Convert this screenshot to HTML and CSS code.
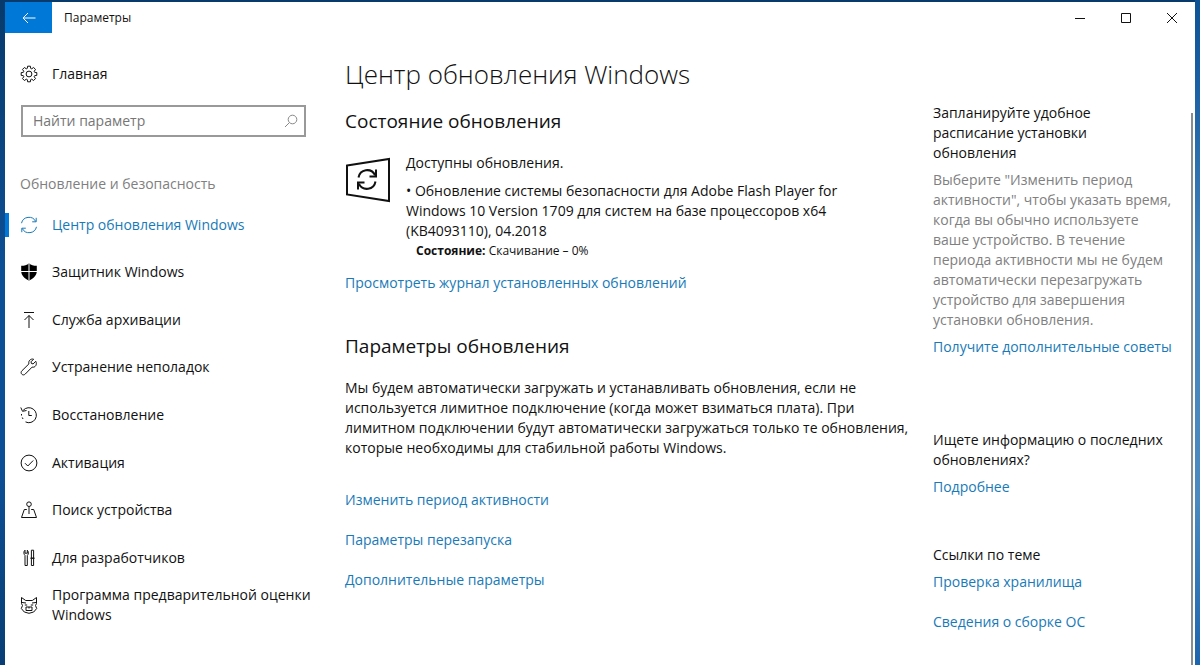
FILE: index.html
```html
<!DOCTYPE html>
<html lang="ru">
<head>
    <meta charset="UTF-8">
    <meta name="viewport" content="width=device-width, initial-scale=1.0">
    <title>Параметры</title>
    <link rel="stylesheet" href="styles.css">
</head>
<body>

<div class="window">

    <!-- Заголовок окна -->
    <header class="titlebar">
        <button class="back" aria-label="Назад">
            <svg width="14" height="12" viewBox="0 0 14 12"><path d="M13.500 6H1M6 1L1 6l5 5"/></svg>
        </button>
        <span class="title">Параметры</span>
        <button class="control" aria-label="Свернуть">
            <svg width="12" height="12" viewBox="0 0 12 12"><path d="M1 6.500h10"/></svg>
        </button>
        <button class="control" aria-label="Развернуть">
            <svg width="12" height="12" viewBox="0 0 12 12"><path d="M1.500 1.500h9v9h-9z"/></svg>
        </button>
        <button class="control" aria-label="Закрыть">
            <svg width="12" height="12" viewBox="0 0 12 12"><path d="M1 1l10 10M11 1L1 11"/></svg>
        </button>
    </header>

    <div class="content">

        <!-- Левое меню -->
        <aside class="sidebar">
            <a class="home" href="#">
                <svg class="icon" viewBox="0 0 18 18"><path d="M7.600 1.200h2.800l.3 2.200 1 .4 1.900-1.300 1.900 1.900-1.300 1.900.4 1 2.200.3v2.800l-2.200.3-.4 1 1.300 1.900-1.900 1.900-1.900-1.300-1 .4-.3 2.200H7.600l-.3-2.200-1-.4-1.900 1.300-1.900-1.900 1.300-1.900-.4-1-2.200-.3V7.600l2.200-.3.4-1-1.300-1.900 1.900-1.900 1.900 1.300 1-.4z"/><circle cx="9" cy="9" r="2.900"/></svg>
                Главная
            </a>

            <form class="search">
                <input type="search" placeholder="Найти параметр" aria-label="Найти параметр">
                <button type="button" aria-label="Поиск">
                    <svg width="14" height="14" viewBox="0 0 14 14"><circle cx="8.500" cy="5.500" r="4.300"/><path d="M5.400 8.600L1 13"/></svg>
                </button>
            </form>

            <h2 class="section">Обновление и безопасность</h2>

            <nav class="menu">
                <a class="item active" href="#">
                    <svg class="icon" viewBox="0 0 18 18"><path d="M1.500 7.200A7.600 7.600 0 0 1 15.700 5.500M16.500 10.800A7.600 7.600 0 0 1 2.300 12.500M16.200 1.800v4h-4M1.800 16.200v-4h4"/></svg>
                    Центр обновления Windows
                </a>
                <a class="item" href="#">
                    <svg class="icon" viewBox="0 0 18 18"><path class="solid" d="M9 .5c2.200 1.600 4.500 2.300 7.800 2.300v5.300c0 4.300-3 7.400-7.800 9.500-4.800-2.100-7.800-5.200-7.800-9.500V2.800C4.500 2.800 6.800 2.100 9 .5z"/><path class="cross" d="M9 1v16M1 8.500h16"/></svg>
                    Защитник Windows
                </a>
                <a class="item" href="#">
                    <svg class="icon" viewBox="0 0 18 18"><path d="M4 1.500h10M9 17V4.500M4.500 9L9 4.500 13.500 9"/></svg>
                    Служба архивации
                </a>
                <a class="item" href="#">
                    <svg class="icon" viewBox="0 0 18 18"><path d="M15.800 3.300l-2.700 2.600-1.700-.4-.4-1.700 2.600-2.600c-2.800-.8-5.500 1.500-4.700 4.700L2 12.700c-2.500 2.400.9 5.800 3.300 3.300l6.800-6.900c3.200.8 5.300-2.700 3.700-5.800z"/></svg>
                    Устранение неполадок
                </a>
                <a class="item" href="#">
                    <svg class="icon" viewBox="0 0 18 18"><path d="M3.200 4.300A7.500 7.500 0 1 1 5.500 15.900M.8 1.500l1.700 3.800 4-.8M8.800 5v4.500h3"/><path d="M1.500 8v1.500M2.300 11.500l.7 1.500"/></svg>
                    Восстановление
                </a>
                <a class="item" href="#">
                    <svg class="icon" viewBox="0 0 18 18"><circle cx="9" cy="9" r="7.900"/><path d="M5 9.200l2.800 2.800L13.200 6.500"/></svg>
                    Активация
                </a>
                <a class="item" href="#">
                    <svg class="icon" viewBox="0 0 18 18"><circle cx="9" cy="3.200" r="2.300"/><path d="M9 5.500v7.500M6.800 8.500H4.300L1.500 16.500h15L13.700 8.500h-2.500"/></svg>
                    Поиск устройства
                </a>
                <a class="item" href="#">
                    <svg class="icon" viewBox="0 0 18 18"><path d="M5 1.200C3.300 2.600 3.700 5.200 5 6.500v10h2.300v-10C8.700 5.200 8.800 2.600 7.300 1.200v3H5zM11.400 1.200h2.200v8h-2.200zM10.300 9.200h4.400M11.400 9.200v7.300h2.200V9.200"/></svg>
                    Для разработчиков
                </a>
                <a class="item" href="#">
                    <svg class="icon" viewBox="0 0 18 18"><path d="M1.500 1.500l4.200 3h6.600l4.200-3v6l-1 2 1.200 3-3 3.500L9 17.300 4.300 16l-3-3.500 1.200-3-1-2zM2 6.500l4 .5M16 6.500l-4 .5M6 11h6v3.500H6zM4.800 9h2.400M10.800 9h2.400M9 11v1.500"/></svg>
                    Программа предварительной оценки Windows
                </a>
            </nav>
        </aside>

        <!-- Основная часть -->
        <main class="main">
            <h1>Центр обновления Windows</h1>

            <h2>Состояние обновления</h2>
            <div class="status">
                <svg class="status-icon" width="46" height="46" viewBox="0 0 46 46">
                    <path d="M2 8.500L44 2v42L2 37.500z"/>
                    <path d="M13.500 20.500c1.500-8.500 12.500-10 16.500-2.500M31 12.500v7h-6.500M30.500 24.500c-1.500 8.500-12.500 10-16.500 2.500M13 32.500v-7h6.500"/>
                </svg>
                <div class="status-text">
                    <p class="available">Доступны обновления.</p>
                    <p>• Обновление системы безопасности для Adobe Flash Player for Windows 10 Version 1709 для систем на базе процессоров x64 (KB4093110), 04.2018</p>
                    <p class="progress"><b>Состояние:</b> Скачивание – 0%</p>
                </div>
            </div>
            <a href="#">Просмотреть журнал установленных обновлений</a>

            <h2 class="params">Параметры обновления</h2>
            <p class="info">Мы будем автоматически загружать и устанавливать обновления, если не используется лимитное подключение (когда может взиматься плата). При лимитном подключении будут автоматически загружаться только те обновления, которые необходимы для стабильной работы Windows.</p>
            <div class="links">
                <a href="#">Изменить период активности</a>
                <a href="#">Параметры перезапуска</a>
                <a href="#">Дополнительные параметры</a>
            </div>
        </main>

        <!-- Подсказки справа -->
        <aside class="tips">
            <section>
                <h3>Запланируйте удобное расписание установки обновления</h3>
                <p>Выберите "Изменить период активности", чтобы указать время, когда вы обычно используете ваше устройство. В течение периода активности мы не будем автоматически перезагружать устройство для завершения установки обновления.</p>
                <a href="#">Получите дополнительные советы</a>
            </section>
            <section class="news">
                <h3>Ищете информацию о последних обновлениях?</h3>
                <a href="#">Подробнее</a>
            </section>
            <section class="related">
                <h3>Ссылки по теме</h3>
                <div class="links">
                    <a href="#">Проверка хранилища</a>
                    <a href="#">Сведения о сборке ОС</a>
                </div>
            </section>
        </aside>

        <div class="scrollbar"></div>
    </div>
</div>

</body>
</html>
```
FILE: styles.css
```css
* {
    box-sizing: border-box;
}

body {
    margin: 0;
    padding: 2px 5px 0;
    min-height: 100vh;
    display: flex;
    /* Полоса рабочего стола справа светлее, чем слева */
    background:
        linear-gradient(#0d5294, #1a5fa3 12%, #4484bb 40%, #4a8ac0 75%, #1c64ae) right / 5px 100% no-repeat,
        linear-gradient(#083a6b, #0d4f94 40%, #0d4f96 70%, #083e74);
    color: #111;
    font: 14px/20px "Open Sans", "Noto Sans", sans-serif;
}

h1, h2, h3, p {
    margin: 0;
    font-weight: normal;
}

a {
    color: #187ab8;
    text-decoration: none;
}

button {
    display: flex;
    align-items: center;
    justify-content: center;
    padding: 0;
    border: none;
    background: none;
    font: inherit;
    color: inherit;
}

svg {
    flex: none;
    fill: none;
    stroke: currentColor;
}

.window {
    flex: 1;
    display: flex;
    flex-direction: column;
    background: #fff;
}

/* Заголовок окна */
.titlebar {
    display: flex;
    height: 31px;
}

.back {
    width: 47px;
    background: #0078d7;
    color: #fff;
}

.title {
    flex: 1;
    padding-left: 12px;
    font-size: 12px;
    line-height: 31px;
}

.control {
    width: 46px;
}

.content {
    flex: 1;
    display: grid;
    grid-template-columns: 340px 1fr 258px 4px;
}

/* Левое меню */
.sidebar {
    display: flex;
    flex-direction: column;
    padding: 31px 0 36px;
}

.home, .item {
    display: flex;
    align-items: center;
    gap: 14px;
    padding: 0 15px;
    color: #111;
}

.icon {
    width: 18px;
    height: 18px;
}

.solid {
    fill: #000;
    stroke: none;
}

.cross {
    stroke: #fff;
}

.search {
    display: flex;
    align-items: center;
    height: 32px;
    margin: 21px 39px 0 16px;
    border: 2px solid #999;
}

.search input {
    flex: 1;
    min-width: 0;
    padding: 0 10px;
    border: none;
    outline: none;
    background: none;
    font: inherit;
}

.search input::placeholder {
    color: #767676;
    opacity: 1;
}

.search button {
    width: 26px;
    height: 26px;
    color: #888;
}

.section {
    margin-top: 37px;
    padding-left: 15px;
    font-size: 14px;
    color: #808080;
}

.menu {
    flex: 1;
    display: flex;
    flex-direction: column;
    margin-top: 7px;
}

.item {
    flex: 1 0 40px;
}

.item.active {
    color: #187ab8;
    background: linear-gradient(#0078d7, #0078d7) left center / 4px 24px no-repeat;
}

/* Основная часть */
.main {
    padding: 23px 20px 20px 0;
}

h1 {
    font-size: 26px;
    font-weight: 300;
    line-height: 36px;
}

.main h2 {
    margin-top: 16px;
    font-size: 19px;
    line-height: 26px;
}

.status {
    display: flex;
    gap: 15px;
    margin: 19px 0 12px;
}

.status-icon {
    margin-top: 4px;
    stroke: #111;
    stroke-width: 2;
}

.status-text {
    padding-right: 60px;
}

.available {
    margin-bottom: 8px;
}

.progress {
    padding-left: 10px;
    font-size: 12px;
}

.main .params {
    margin-top: 40px;
}

.info {
    margin-top: 19px;
}

.links {
    display: flex;
    flex-direction: column;
    align-items: flex-start;
    gap: 20px;
}

.info + .links {
    margin-top: 32px;
}

/* Подсказки справа */
.tips {
    padding: 70px 18px 20px 0;
}

.tips section {
    display: flex;
    flex-direction: column;
    align-items: flex-start;
    gap: 7px;
}

.tips .news {
    margin-top: 73px;
}

.tips .related {
    margin-top: 48px;
}

.tips h3 {
    font-size: 14px;
}

.tips p {
    color: #808080;
}

.scrollbar {
    margin-top: 80px;
    border-left: 2px solid #858f92;
}
```
